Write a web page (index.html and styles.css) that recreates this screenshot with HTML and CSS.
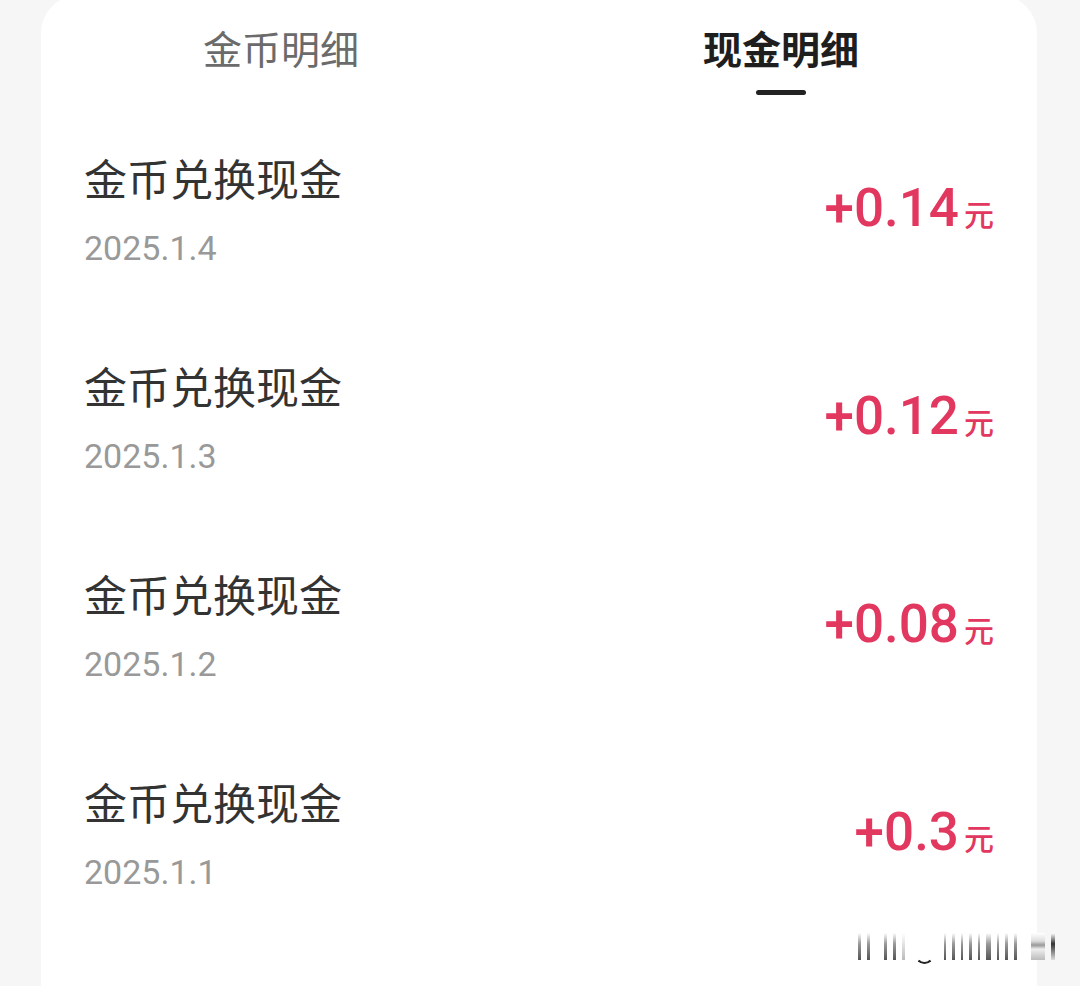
FILE: index.html
```html
<!DOCTYPE html>
<html lang="zh-CN">

<head>
    <meta charset="UTF-8">
    <meta name="viewport" content="width=device-width, initial-scale=1.0">
    <title>现金明细</title>
    <link rel="stylesheet" href="styles.css">
</head>

<body>
    <main class="card">
        <nav class="tabs">
            <a class="tab" href="#">金币明细</a>
            <a class="tab tab-active" href="#">现金明细<span class="tab-line"></span></a>
        </nav>

        <ul class="records">
            <li class="record">
                <div class="record-info">
                    <div class="record-title">金币兑换现金</div>
                    <div class="record-date">2025.1.4</div>
                </div>
                <div class="record-amount">+0.14<span class="unit">元</span></div>
            </li>
            <li class="record">
                <div class="record-info">
                    <div class="record-title">金币兑换现金</div>
                    <div class="record-date">2025.1.3</div>
                </div>
                <div class="record-amount">+0.12<span class="unit">元</span></div>
            </li>
            <li class="record">
                <div class="record-info">
                    <div class="record-title">金币兑换现金</div>
                    <div class="record-date">2025.1.2</div>
                </div>
                <div class="record-amount">+0.08<span class="unit">元</span></div>
            </li>
            <li class="record">
                <div class="record-info">
                    <div class="record-title">金币兑换现金</div>
                    <div class="record-date">2025.1.1</div>
                </div>
                <div class="record-amount">+0.3<span class="unit">元</span></div>
            </li>
        </ul>
    </main>

    <!-- marca d'água borrada no canto -->
    <div class="watermark">
        <span class="bar"></span><span class="bar gap"></span><span class="bar"></span><span class="bar"></span>
        <span class="bar light"></span><span class="ring"></span><span class="bar"></span><span class="bar thin"></span>
        <span class="bar thin"></span><span class="bar"></span><span class="bar thin"></span><span class="bar wide"></span>
        <span class="bar"></span><span class="bar"></span><span class="bar gap"></span><span class="bar smear"></span>
        <span class="bar dark"></span>
    </div>
</body>

</html>
```

FILE: styles.css
```css
body {
    font-family: Roboto, "Noto Sans CJK SC", sans-serif;
    background-color: #f6f6f6;
    margin: 0;
    padding: 0;
    position: relative;
    min-height: 986px;
    overflow: hidden;
}

.card {
    background-color: #fff;
    margin: -5px 43px 0 41px;
    border-radius: 38px 38px 0 0;
    min-height: 991px;
}

.tabs {
    display: grid;
    grid-template-columns: 500px 500px;
    margin-left: -10px;
    padding-top: 36px;
}

.tab {
    display: flex;
    flex-direction: column;
    align-items: center;
    text-decoration: none;
    color: #6b6b6b;
    font-size: 39px;
    line-height: 40px;
}

.tab-active {
    color: #1e1e1e;
    font-weight: bold;
}

.tab-line {
    width: 50px;
    height: 5px;
    margin-top: 19px;
    border-radius: 3px;
    background-color: #222;
}

.records {
    list-style: none;
    margin: 0;
    padding: 15px 0 0;
}

.record {
    height: 208px;
    box-sizing: border-box;
    display: flex;
    align-items: center;
    justify-content: space-between;
    padding: 0 43px 0 43px;
}

.record-title {
    font-size: 43px;
    line-height: 43px;
    color: #333;
}

.record-date {
    margin-top: 25px;
    font-size: 34px;
    line-height: 40px;
    color: #999;
}

.record-amount {
    margin-bottom: 4px;
    font-size: 53px;
    line-height: 55px;
    font-weight: 500;
    color: #e2375f;
}

.unit {
    margin-left: 5px;
    font-size: 30px;
    font-weight: 500;
}

.watermark {
    position: absolute;
    left: 858px;
    top: 933px;
    width: 197px;
    height: 27px;
    display: flex;
    align-items: stretch;
    gap: 6px;
}

.bar {
    width: 4px;
    background: linear-gradient(#fff, #999 40%, #555);
}

.bar.gap {
    margin-right: 8px;
}

.bar.light {
    background: linear-gradient(#fff, #bbb);
}

.bar.thin {
    width: 3px;
}

.bar.wide {
    width: 6px;
}

.bar.smear {
    width: 18px;
    background: linear-gradient(#fff, #ddd 30%, #999 45%, #eee 60%, #bbb);
}

.bar.dark {
    width: 6px;
    background: linear-gradient(#fff, #333 40%, #ddd);
}

.ring {
    width: 20px;
    margin: 0 4px -4px;
    height: 8px;
    align-self: flex-end;
    border: 2px solid #222;
    border-top: none;
    border-left-color: transparent;
    border-right-color: transparent;
    border-radius: 0 0 10px 10px;
}
```
